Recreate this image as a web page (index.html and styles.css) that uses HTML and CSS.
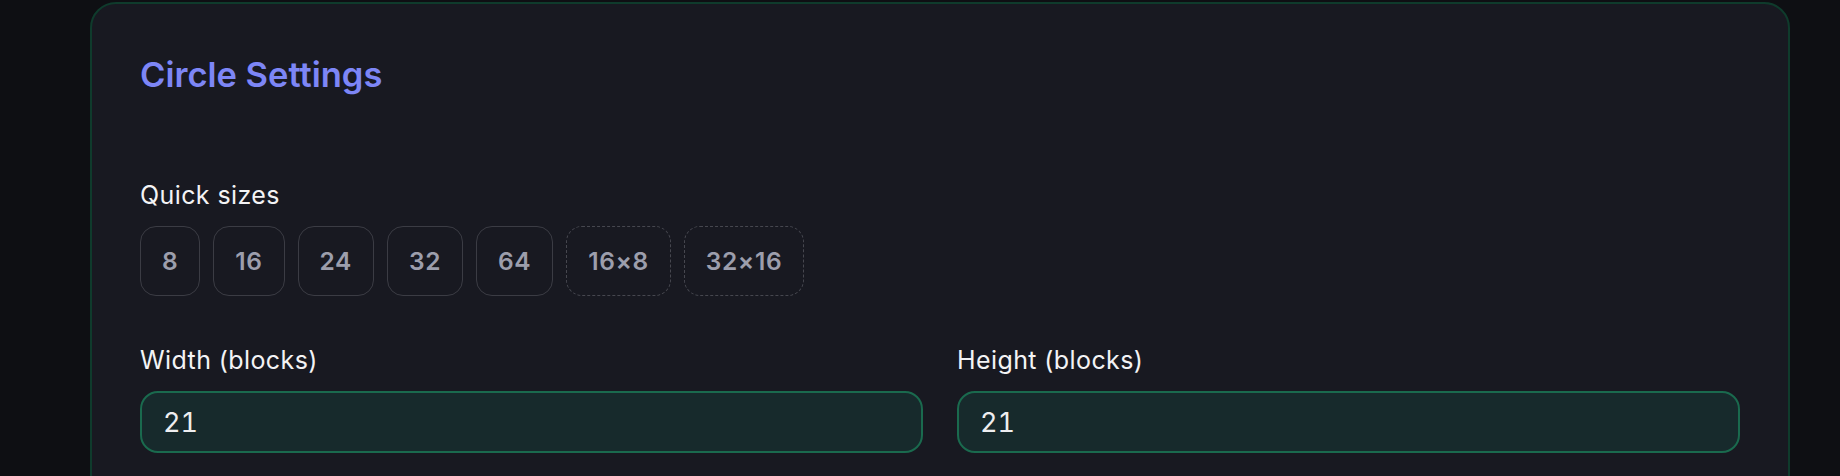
FILE: index.html
```html
<!DOCTYPE html>
<html lang="en">
<head>
<meta charset="utf-8">
<title>Circle Settings</title>
<link rel="stylesheet" href="styles.css">
</head>
<body>
  <section class="card">
    <h2 class="card-title">Circle Settings</h2>

    <div class="field quick">
      <div class="label">Quick sizes</div>
      <div class="chips">
        <button class="chip">8</button>
        <button class="chip">16</button>
        <button class="chip">24</button>
        <button class="chip">32</button>
        <button class="chip">64</button>
        <button class="chip chip-dashed">16×8</button>
        <button class="chip chip-dashed">32×16</button>
      </div>
    </div>

    <div class="dims">
      <label class="field">
        <span class="label">Width (blocks)</span>
        <input class="num-input" type="text" value="21">
      </label>
      <label class="field">
        <span class="label">Height (blocks)</span>
        <input class="num-input" type="text" value="21">
      </label>
    </div>
  </section>
</body>
</html>
```

FILE: styles.css
```css
* { box-sizing: border-box; }

html, body {
  margin: 0;
  padding: 0;
  height: 100%;
  background: #0e0f13;
  overflow: hidden;
}

body {
  font-family: Inter, "Noto Sans", "Liberation Sans", sans-serif;
  color: #f1f1f3;
  padding-top: 2px;
}

.card {
  margin-left: 90px;
  width: 1700px;
  min-height: 600px;
  background: #181921;
  border: 2px solid #0f3b2c;
  border-radius: 26px;
  padding: 48px;
}

.card-title {
  margin: 3px 0 0;
  font-size: 34.5px;
  font-weight: 600;
  line-height: 40px;
  color: #7d86f6;
  letter-spacing: 0;
}

.field {
  display: flex;
  flex-direction: column;
}

.quick {
  margin-top: 81px;
}

.label {
  display: block;
  font-size: 25px;
  line-height: 38px;
  font-weight: 400;
  color: #f3f3f5;
  letter-spacing: 0.4px;
}

.chips {
  display: flex;
  gap: 13px;
  margin-top: 12px;
}

.chip {
  height: 70px;
  padding: 0 21px;
  display: inline-flex;
  align-items: center;
  justify-content: center;
  background: transparent;
  border: 1.5px solid #3b3c44;
  border-radius: 16px;
  font-family: Inter, "Noto Sans", "Liberation Sans", sans-serif;
  font-size: 24.5px;
  font-weight: 600;
  letter-spacing: 0.6px;
  color: #9c9eac;
}

.chip-dashed {
  border-style: dashed;
  border-color: #46474f;
}

.dims {
  display: grid;
  grid-template-columns: 1fr 1fr;
  gap: 34px;
  margin-top: 45px;
}

.dims .label {
  margin-bottom: 12px;
}

.num-input {
  height: 62px;
  width: 100%;
  padding: 0 21px;
  background: #172a2c;
  border: 2px solid #1a6a4e;
  border-radius: 18px;
  font-family: Inter, "Noto Sans", "Liberation Sans", sans-serif;
  font-size: 27px;
  font-variant-numeric: tabular-nums;
  color: #eeeef0;
  outline: none;
}
```
